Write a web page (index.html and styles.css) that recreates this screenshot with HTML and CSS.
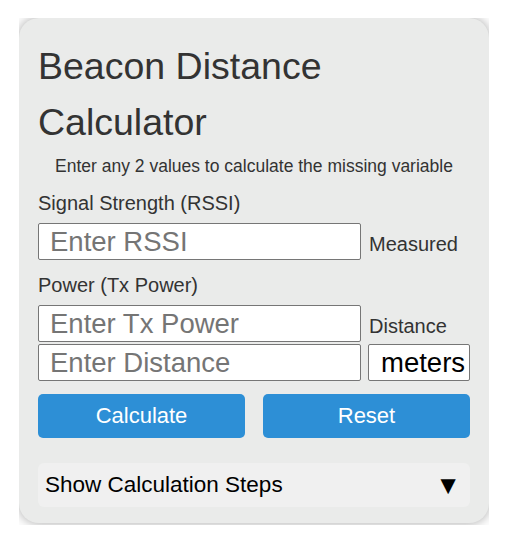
FILE: index.html
```html
<!DOCTYPE html>
<html lang="en">
<head>
    <meta charset="UTF-8">
    <meta name="viewport" content="width=device-width, initial-scale=1.0">
    <title>Beacon Distance Calculator</title>
    <link rel="stylesheet" href="styles.css">
</head>
<body>
    <div class="frame">
        <div class="calculator">
            <h1>Beacon Distance Calculator</h1>
            <p class="hint">Enter any 2 values to calculate the missing variable</p>

            <!-- RSSI -->
            <label class="field-label" for="rssi">Signal Strength (RSSI)</label>
            <div class="field-row">
                <input type="text" id="rssi" placeholder="Enter RSSI">
                <span class="side-label">Measured</span>
            </div>

            <!-- Tx power -->
            <label class="field-label" for="txPower">Power (Tx Power)</label>
            <div class="field-row">
                <input type="text" id="txPower" placeholder="Enter Tx Power">
                <span class="side-label">Distance</span>
            </div>

            <!-- Distance -->
            <div class="field-row tight">
                <input type="text" id="distance" placeholder="Enter Distance">
                <select id="unit" class="unit-select">
                    <option value="m">meters</option>
                    <option value="ft">feet</option>
                </select>
            </div>

            <div class="button-row">
                <button class="action-button" onclick="calculate()">Calculate</button>
                <button class="action-button" onclick="resetForm()">Reset</button>
            </div>

            <div class="steps-toggle" onclick="toggleSteps()">
                <span>Show Calculation Steps</span>
                <span class="steps-arrow">&#9660;</span>
            </div>
        </div>
    </div>

    <script>
        function calculate() {
            var rssi = parseFloat(document.getElementById('rssi').value);
            var tx = parseFloat(document.getElementById('txPower').value);
            var dist = parseFloat(document.getElementById('distance').value);
            var n = 2;
            if (!isNaN(rssi) && !isNaN(tx)) {
                document.getElementById('distance').value = Math.pow(10, (tx - rssi) / (10 * n)).toFixed(2);
            } else if (!isNaN(tx) && !isNaN(dist)) {
                document.getElementById('rssi').value = (tx - 10 * n * Math.log10(dist)).toFixed(2);
            } else if (!isNaN(rssi) && !isNaN(dist)) {
                document.getElementById('txPower').value = (rssi + 10 * n * Math.log10(dist)).toFixed(2);
            }
        }

        function resetForm() {
            document.getElementById('rssi').value = '';
            document.getElementById('txPower').value = '';
            document.getElementById('distance').value = '';
        }

        function toggleSteps() {
            // steps panel not shown in this view
        }
    </script>
</body>
</html>
```

FILE: styles.css
```css
body {
    margin: 0;
    padding: 0;
    background-color: #fff;
    font-family: 'Liberation Sans', Arial, sans-serif;
    color: #333;
}

.frame {
    margin: 18px 0 0 19px;
    width: 470px;
    height: 507px;
    overflow: hidden;
    background-color: #fff;
}

.calculator {
    background-color: #eaebea;
    border-radius: 20px;
    box-shadow: 0 0 12px rgba(0, 0, 0, 0.35);
    padding: 20px 19px 16px 19px;
    height: 505px;
    box-sizing: border-box;
}

h1 {
    margin: 0;
    font-size: 37.5px;
    font-weight: normal;
    line-height: 56px;
    color: #333;
}

.hint {
    margin: 6px 0 0 0;
    text-align: center;
    font-size: 17.5px;
    line-height: 20px;
}

.field-label {
    display: block;
    margin-top: 16px;
    font-size: 20px;
    line-height: 23px;
}

.field-label + .field-row {
    margin-top: 8px;
}

.field-row {
    display: flex;
    align-items: flex-end;
    gap: 8px;
}

.field-row.tight {
    margin-top: 2px;
    gap: 7px;
}

.field-row + .field-label {
    margin-top: 14px;
}

input[type="text"] {
    width: 323px;
    height: 37px;
    box-sizing: border-box;
    padding: 0 11px;
    border: 1px solid #767676;
    border-radius: 2px;
    background-color: #fff;
    font-family: 'Liberation Sans', Arial, sans-serif;
    font-size: 27.5px;
    color: #333;
    outline: none;
}

input::placeholder {
    color: #757575;
}

.side-label {
    font-size: 20px;
    line-height: 23px;
    padding-bottom: 4px;
    white-space: nowrap;
}

.unit-select {
    width: 102px;
    height: 37px;
    box-sizing: border-box;
    padding: 0 0 0 12px;
    border: 1px solid #767676;
    border-radius: 2px;
    background-color: #fff;
    font-family: 'Liberation Sans', Arial, sans-serif;
    font-size: 27.5px;
    color: #000;
    appearance: none;
    -webkit-appearance: none;
}

.button-row {
    display: flex;
    gap: 18px;
    margin-top: 13px;
}

.action-button {
    flex: 1;
    height: 44px;
    padding: 0;
    background-color: #2d8fd6;
    color: #fff;
    border: none;
    border-radius: 5px;
    cursor: pointer;
    font-family: 'Liberation Sans', Arial, sans-serif;
    font-size: 22px;
}

.steps-toggle {
    display: flex;
    justify-content: space-between;
    align-items: center;
    margin-top: 25px;
    height: 44px;
    padding: 0 9px 0 7px;
    background-color: #f0f0f0;
    border-radius: 6px;
    font-size: 22.5px;
    color: #000;
    cursor: pointer;
}

.steps-arrow {
    font-size: 26px;
}
```
